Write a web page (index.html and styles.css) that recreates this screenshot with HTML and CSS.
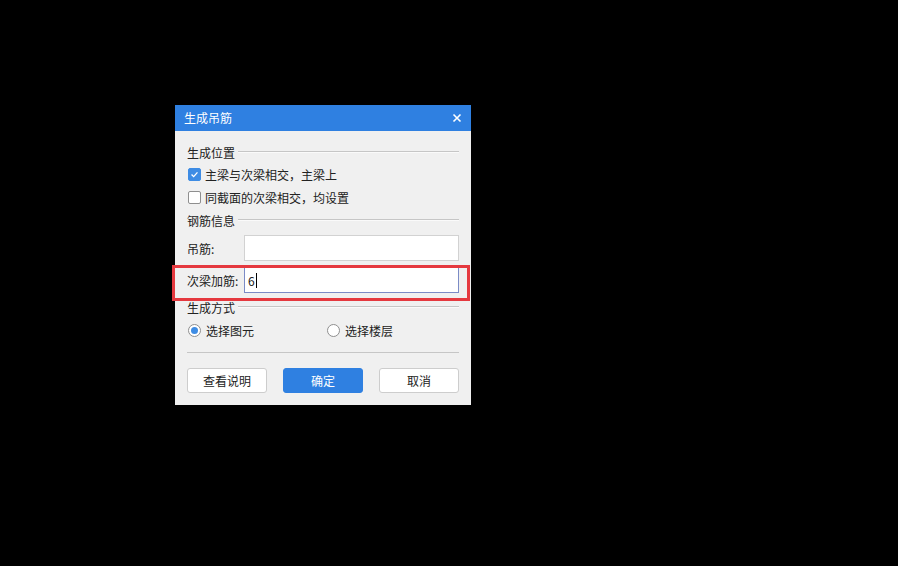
FILE: index.html
```html
<!DOCTYPE html>
<html lang="zh-CN">
<head>
<meta charset="utf-8">
<title>生成吊筋</title>
<link rel="stylesheet" href="styles.css">
</head>
<body>
<div class="dialog">
  <div class="titlebar">
    <span class="title">生成吊筋</span>
    <svg class="close" width="10" height="10" viewBox="0 0 10 10"><path d="M1.5 1.5 L8.5 8.5 M8.5 1.5 L1.5 8.5" stroke="#fff" stroke-width="1.6" fill="none"/></svg>
  </div>
  <div class="content">
    <div class="section"><span>生成位置</span><i class="rule"></i></div>
    <div class="row check-row">
      <span class="chk checked"><svg width="13" height="13" viewBox="0 0 13 13"><path d="M3 6.6 L5.5 9 L10 4" stroke="#fff" stroke-width="1.6" fill="none"/></svg></span>
      <span>主梁与次梁相交，主梁上</span>
    </div>
    <div class="row check-row">
      <span class="chk"></span>
      <span>同截面的次梁相交，均设置</span>
    </div>
    <div class="section"><span>钢筋信息</span><i class="rule"></i></div>
    <div class="field first">
      <span class="label">吊筋:</span>
      <span class="input"></span>
    </div>
    <div class="field second">
      <span class="label">次梁加筋:</span>
      <span class="input focus">6<i class="caret"></i></span>
    </div>
    <div class="section s3"><span>生成方式</span><i class="rule"></i></div>
    <div class="row radio-row">
      <span class="opt"><span class="radio on"></span><span>选择图元</span></span>
      <span class="opt opt2"><span class="radio"></span><span>选择楼层</span></span>
    </div>
    <div class="sep"></div>
    <div class="buttons">
      <span class="btn">查看说明</span>
      <span class="btn primary">确定</span>
      <span class="btn">取消</span>
    </div>
  </div>
  <div class="highlight"></div>
</div>
</body>
</html>
```
FILE: styles.css
```css
html, body {
  margin: 0;
  padding: 0;
  background: #000;
}
body {
  width: 898px;
  height: 566px;
  padding: 105px 0 0 175px;
  box-sizing: border-box;
  font-family: "Noto Sans CJK SC", "Noto Sans", sans-serif;
  font-size: 12px;
  color: #222;
}
.dialog {
  position: relative;
  width: 296px;
  background: #f0f0f0;
}
.titlebar {
  height: 26px;
  background: #2f80e1;
  color: #fff;
  display: flex;
  align-items: center;
  justify-content: space-between;
  padding: 0 9px 0 9px;
}
.title { line-height: 26px; }
.close { display: block; margin-right: 0; }
.content {
  padding: 10px 12px 12px 12px;
}
.section {
  height: 22px;
  display: flex;
  align-items: center;
}
.section .rule {
  flex: 1;
  height: 0;
  border-top: 1px solid #c6c6c6;
  border-bottom: 1px solid #fafafa;
  margin-left: 3px;
}
.s3 { margin-top: 3px; }
.row {
  height: 23px;
  display: flex;
  align-items: center;
}
.chk {
  width: 13px;
  height: 13px;
  box-sizing: border-box;
  border: 1px solid #8f8f8f;
  border-radius: 2px;
  background: #fff;
  margin: 0 4px 0 1px;
  display: flex;
  align-items: center;
  justify-content: center;
}
.chk svg { display: block; }
.chk.checked {
  background: #3e8ce4;
  border-color: #3e8ce4;
}
.field {
  height: 26px;
  display: flex;
  align-items: center;
}
.field.first { margin-top: 4px; }
.field.second { margin-top: 6px; }
.label { width: 57px; }
.input {
  flex: 1;
  height: 26px;
  box-sizing: border-box;
  background: #fff;
  border: 1px solid #d2d2d2;
  display: flex;
  align-items: center;
  padding-left: 3px;
}
.input.focus { border-color: #7b8bc6; }
.caret {
  display: inline-block;
  width: 1px;
  height: 15px;
  background: #000;
  margin-left: 1px;
}
.radio-row { margin-top: 1px; }
.opt {
  display: flex;
  align-items: center;
}
.opt2 { margin-left: 0; position: relative; left: 0; }
.opt:first-child { width: 139px; }
.radio {
  width: 13px;
  height: 13px;
  box-sizing: border-box;
  border: 1px solid #8f8f8f;
  border-radius: 50%;
  background: #fff;
  margin: 0 5px 0 1px;
  display: flex;
  align-items: center;
  justify-content: center;
}
.radio.on::after {
  content: "";
  width: 7px;
  height: 7px;
  border-radius: 50%;
  background: #3e8ce4;
}
.sep {
  margin-top: 10px;
  height: 0;
  border-top: 1px solid #c6c6c6;
}
.buttons {
  margin-top: 15px;
  display: flex;
  justify-content: space-between;
}
.btn {
  width: 80px;
  height: 25px;
  box-sizing: border-box;
  border: 1px solid #cdcdcd;
  border-radius: 3px;
  background: #fff;
  display: flex;
  align-items: center;
  justify-content: center;
}
.btn.primary {
  background: #2f80e1;
  border-color: #2f80e1;
  color: #fff;
}
.highlight {
  position: absolute;
  left: -3px;
  top: 160px;
  width: 298px;
  height: 36px;
  box-sizing: border-box;
  border: 3px solid #e5393f;
  pointer-events: none;
}
```
